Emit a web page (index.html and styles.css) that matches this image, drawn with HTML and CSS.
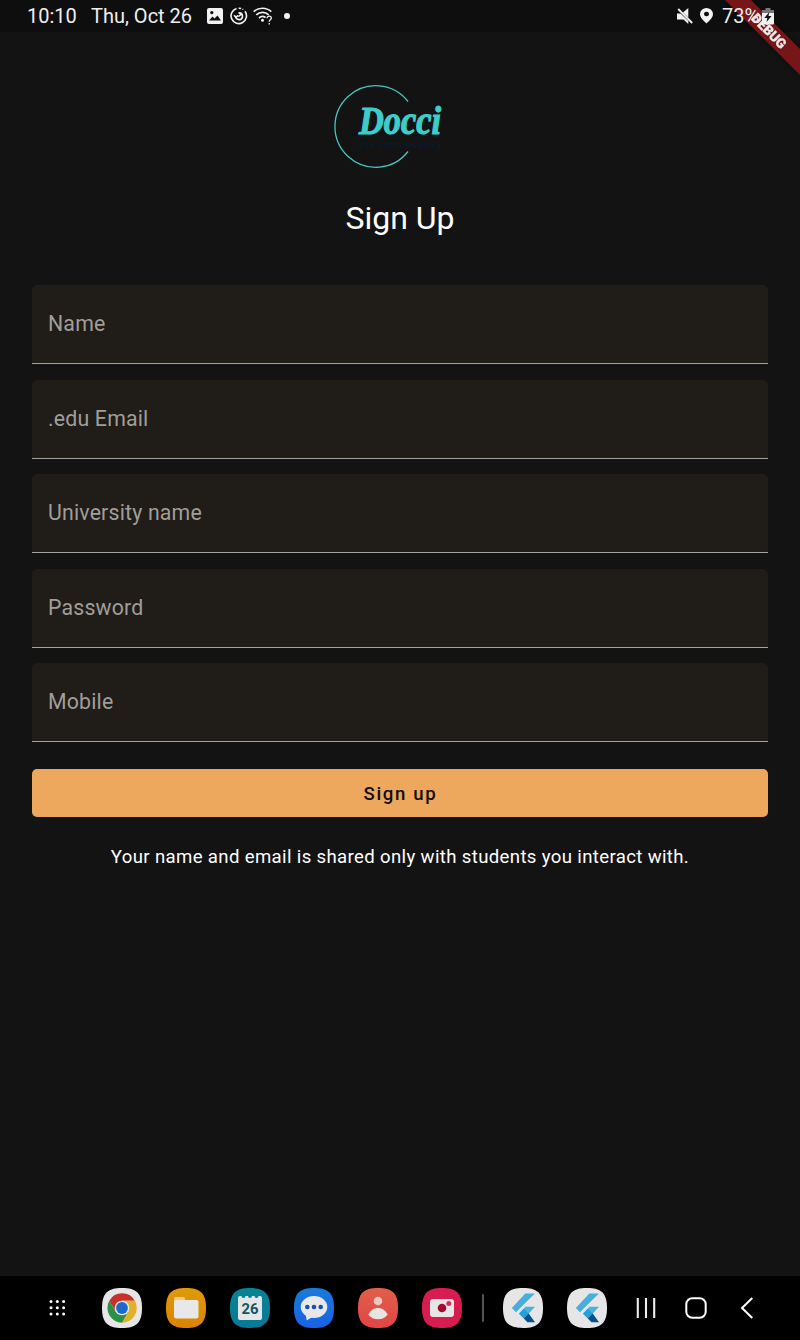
FILE: index.html
```html
<!DOCTYPE html>
<html lang="en">
<head>
<meta charset="utf-8">
<title>Docci Sign Up</title>
<link rel="stylesheet" href="styles.css">
</head>
<body>
<div class="screen">
  <header class="status">
    <span class="clock">10:10</span>
    <span class="date">Thu, Oct 26</span>
    <svg class="st-image" width="16" height="16" viewBox="0 0 16 16"><path fill="#f2f2f2" fill-rule="evenodd" d="M2 0h12a2 2 0 0 1 2 2v12a2 2 0 0 1-2 2H2a2 2 0 0 1-2-2V2a2 2 0 0 1 2-2zM2 12.500h12L10.500 7.500 7.500 10.500 5.500 8.500zM4.800 3a1.600 1.600 0 1 0 .01 0z"/></svg>
    <svg class="st-sync" width="18" height="18" viewBox="0 0 18 18" fill="none" stroke="#f2f2f2" stroke-width="1.600"><path d="M6.500 1.500A7.700 7.700 0 1 0 15 4.300"/><path d="M8.600 1.200a7.700 7.700 0 0 1 4.600 1.400" stroke-dasharray="2.500 1.500"/><path d="M5.700 9.500a3.400 3.400 0 1 0 3.500-3.700"/><path d="M4 8.200l2 2.200 2.200-2M8.500 5.500l2.500 2-2.500 2"/></svg>
    <svg class="st-wifi" width="20" height="18" viewBox="0 0 20 18" fill="none" stroke="#f2f2f2" stroke-width="1.700"><path d="M.7 4.700a13 13 0 0 1 17.600 0M3.300 7.900a9 9 0 0 1 12.400 0M6 11a5.300 5.300 0 0 1 6.500-.5"/><circle cx="9.500" cy="13.300" r="1.500" fill="#f2f2f2" stroke="none"/><path d="M14 11.300c0-3 4.300-2.700 4.300-.2 0 1.800-2.100 1.700-2.100 3.700M16.200 16v1.500" stroke-width="1.300"/></svg>
    <span class="st-dot"></span>
    <svg class="st-mute" width="16" height="17" viewBox="0 0 16 17"><path fill="#f2f2f2" d="M0 5.500h3.500L11.300 13v3L6.500 11.500H0zM6 4.500L11.300 0v9.500z"/><path d="M1.200 1l14 14" stroke="#f2f2f2" stroke-width="1.800"/></svg>
    <svg class="st-pin" width="13" height="16" viewBox="0 0 12 16" preserveAspectRatio="none"><path fill="#f2f2f2" fill-rule="evenodd" d="M6 0a6 6 0 0 1 6 6c0 3.500-3 6.500-6 9.500C3 12.500 0 9.500 0 6a6 6 0 0 1 6-6zM6 3.700a2.300 2.300 0 1 0 .01 0z"/></svg>
    <span class="percent">73%</span>
    <svg class="st-batt" width="12" height="17" viewBox="0 0 12 17"><path fill="#777" d="M3.500 0h5v2H12v4H0V2h3.500z"/><path fill="#f2f2f2" d="M0 5h12v10a1.500 1.500 0 0 1-1.500 1.500h-9A1.500 1.500 0 0 1 0 15z"/><path fill="#111" d="M7.300 4L2.300 10h3L4.600 14l5-6H6.500z"/></svg>
  </header>

  <svg class="debug" width="80" height="80" viewBox="0 0 80 80"><path fill="#771619" d="M5 0h26l49 49v26z"/><text class="debug-text" transform="translate(49 31) rotate(45)" x="0" y="4.700" text-anchor="middle" textLength="43">DEBUG</text></svg>

  <main class="page">
    <svg class="logo" width="134" height="100" viewBox="0 0 134 100"><path d="M76 26.500A40.800 40.800 0 1 0 76 76.500" fill="none" stroke="#48c5c2" stroke-width="1.300"/><text class="logo-name" x="27" y="59" textLength="82" lengthAdjust="spacingAndGlyphs">Docci</text><text class="logo-tag" x="27" y="71.500" textLength="82" lengthAdjust="spacingAndGlyphs">the campus plug</text></svg>
    <h1 class="title">Sign Up</h1>
    <form class="form">
      <div class="field"><label>Name</label></div>
      <div class="field"><label>.edu Email</label></div>
      <div class="field"><label>University name</label></div>
      <div class="field"><label>Password</label></div>
      <div class="field"><label>Mobile</label></div>
      <button class="submit" type="button">Sign up</button>
    </form>
    <p class="note">Your name and email is shared only with students you interact with.</p>
  </main>

  <nav class="dock">
    <svg class="grid-icon" width="40" height="40" viewBox="0 0 40 40" fill="#fff"><circle cx="14" cy="13.500" r="1.500"/><circle cx="20.300" cy="13.500" r="1.500"/><circle cx="26.600" cy="13.500" r="1.500"/><circle cx="14" cy="19.700" r="1.500"/><circle cx="20.300" cy="19.700" r="1.500"/><circle cx="26.600" cy="19.700" r="1.500"/><circle cx="14" cy="25.900" r="1.500"/><circle cx="20.300" cy="25.900" r="1.500"/><circle cx="26.600" cy="25.900" r="1.500"/></svg>
    <svg width="40" height="40" viewBox="0 0 40 40"><use href="#tile" fill="#e6e6e6"/><path fill="#c73129" d="M7.300 12.800A14.700 14.700 0 0 1 32.900 12.800H20L13.700 23.600z"/><path fill="#e3b127" d="M32.900 12.800A14.700 14.700 0 0 1 20 34.700L26.300 23.600 20 12.800z"/><path fill="#2a9147" d="M7.300 12.800A14.700 14.700 0 0 0 20 34.700L26.300 23.600H13.700z"/><circle cx="20" cy="20" r="7.300" fill="#e8e8e8"/><circle cx="20" cy="20" r="5.900" fill="#1b68d1"/></svg>
    <svg width="40" height="40" viewBox="0 0 40 40"><use href="#tile" fill="url(#orange)"/><path fill="#edc98a" d="M8 18V10.500A1.500 1.500 0 0 1 9.500 9h8A1.500 1.500 0 0 1 19 10.500V15z"/><rect x="8" y="12" width="24.500" height="18.500" rx="2" fill="#e8e8e8"/></svg>
    <svg width="40" height="40" viewBox="0 0 40 40"><use href="#tile" fill="url(#teal)"/><path fill="#e6e6e6" d="M10 8h1.500a2 2 0 0 0 4 0h2.500a2 2 0 0 0 4 0h2.500a2 2 0 0 0 4 0H30a2 2 0 0 1 2 2v20a2 2 0 0 1-2 2H10a2 2 0 0 1-2-2V10a2 2 0 0 1 2-2z"/><text class="cal" x="20" y="25.500" text-anchor="middle" textLength="17" lengthAdjust="spacingAndGlyphs">26</text></svg>
    <svg width="40" height="40" viewBox="0 0 40 40"><use href="#tile" fill="url(#blue)"/><ellipse cx="20" cy="19" rx="13.300" ry="11" fill="#e8e8e8"/><path fill="#e8e8e8" d="M11.500 26l1.300 6.500L19 28.500z"/><g fill="#174eb5"><circle cx="13.300" cy="19" r="2.300"/><circle cx="20" cy="19" r="2.300"/><circle cx="26.700" cy="19" r="2.300"/></g></svg>
    <svg width="40" height="40" viewBox="0 0 40 40"><use href="#tile" fill="url(#coral)"/><circle cx="20" cy="13" r="4.300" fill="#eac8c2"/><path fill="#e8e5df" d="M10.300 26.500C13 22 16 20 20 20s7 2 9.700 6.500C27 30 24 31.200 20 31.200s-7-1.200-9.700-4.700z"/></svg>
    <svg width="40" height="40" viewBox="0 0 40 40"><use href="#tile" fill="#d61c50"/><rect x="8" y="11" width="24" height="18" rx="3" fill="#e6e6e6"/><circle cx="20" cy="20" r="4.300" fill="#a40b31"/><circle cx="26.800" cy="15.500" r="2.500" fill="#cc3455"/></svg>
    <span class="divider"></span>
    <svg width="40" height="40" viewBox="0 0 40 40"><use href="#tile" fill="#e6e6e6"/><use href="#flutter"/></svg>
    <svg width="40" height="40" viewBox="0 0 40 40"><use href="#tile" fill="#e6e6e6"/><use href="#flutter"/></svg>
    <svg class="recents" width="20" height="22" viewBox="0 0 20 22"><path d="M1.800 1v20M10 1v20M18.200 1v20" stroke="#eee" stroke-width="2.100"/></svg>
    <svg class="home" width="22" height="22" viewBox="0 0 22 22"><rect x="1.300" y="1.300" width="19.400" height="19.400" rx="6" fill="none" stroke="#fff" stroke-width="2"/></svg>
    <svg class="back" width="14" height="22" viewBox="0 0 14 22"><path d="M12.300 1L2 11l10.300 10" fill="none" stroke="#fff" stroke-width="2"/></svg>
  </nav>
</div>

<svg class="defs" width="0" height="0">
  <defs>
    <path id="tile" d="M20 0C34.500 0 40 5.500 40 20S34.500 40 20 40 0 34.500 0 20 5.500 0 20 0z"/>
    <g id="flutter"><path fill="#48afdc" d="M22.300 5.500h9.500L13 24.200 8.800 20z"/><path fill="#48b3e0" d="M22.500 18.800h9.500L25.800 25.500l-5 4.800-4.800-4.600z"/><path fill="#269ed8" d="M16 25.600l4.800-4.800 4.900 4.800-4.900 4.800z"/><path fill="#07518c" d="M20.800 30.400l4.900-4.800 6.300 8.600h-7.500z"/></g>
    <linearGradient id="orange" x1="0" y1="0" x2="0" y2="1"><stop stop-color="#df9b09"/><stop offset="1" stop-color="#dc8200"/></linearGradient>
    <linearGradient id="teal" x1="0" y1="0" x2="0" y2="1"><stop stop-color="#068593"/><stop offset="1" stop-color="#08789a"/></linearGradient>
    <linearGradient id="blue" x1="0" y1="0" x2="0" y2="1"><stop stop-color="#187bd8"/><stop offset="1" stop-color="#1763e6"/></linearGradient>
    <linearGradient id="coral" x1="0" y1="0" x2="0" y2="1"><stop stop-color="#df6048"/><stop offset="1" stop-color="#e34446"/></linearGradient>
  </defs>
</svg>
</body>
</html>
```
FILE: styles.css
```css
* { box-sizing: border-box; }
body { margin: 0; background: #131313; font-family: Roboto, sans-serif; color: #fff; }
svg { display: block; flex: none; }
.defs { position: absolute; }
.screen { position: relative; width: 800px; height: 1340px; display: flex; flex-direction: column; overflow: hidden; }

.status { position: relative; z-index: 2; height: 32px; display: flex; align-items: center; padding: 0 26px 0 27px; font-size: 20px; color: #eee; white-space: nowrap; }
.screen::before { content: ""; position: absolute; top: 0; left: 0; width: 100%; height: 32px; background: #0e0e0e; }
.clock { width: 64px; }
.date { width: 116px; }
.st-sync { margin-left: 7px; }
.st-wifi { margin-left: 5px; }
.st-dot { width: 6px; height: 6px; border-radius: 50%; background: #f2f2f2; margin-left: 11px; }
.st-mute { margin-left: auto; }
.st-pin { margin-left: 7px; }
.percent { margin-left: 9px; width: 39px; }
.st-batt { margin-left: 1px; }

.debug { position: absolute; top: 0; right: 0; z-index: 1; filter: drop-shadow(0 0 3px rgba(0,0,0,.5)); }
.debug-text { font: 900 13.500px Roboto, sans-serif; fill: #f2eaea; stroke: #f2eaea; stroke-width: .3px; }

.page { flex: 1; display: flex; flex-direction: column; align-items: center; padding: 43px 32px 0; }
.logo { align-self: flex-start; margin-left: 300px; }
.logo-name { font: italic bold 41px "Liberation Serif", serif; fill: #3dcdca; stroke: #3dcdca; stroke-width: 1.200px; }
.logo-tag { font: 7.500px "DejaVu Sans", sans-serif; fill: #061d36; }
.title { margin: 24px 0 0; font-size: 32px; font-weight: 400; line-height: 38px; }
.form { width: 100%; margin-top: 48px; display: flex; flex-direction: column; gap: 15.500px; }
.field { height: 79px; padding: 0 16px .5px; display: flex; align-items: center; background: #201c17; border-radius: 5px 5px 0 0; border-bottom: 1px solid #a3a19e; font-size: 21.300px; letter-spacing: .18px; color: #a09e9b; }
.submit { height: 48px; margin-top: 11.500px; padding: 2px 0 0 1px; border: 0; border-radius: 5px; background: #eda85e; color: #130c05; font: 500 18.600px Roboto, sans-serif; letter-spacing: 1.660px; }
.note { margin: 28px 0 0; font-size: 18.600px; line-height: 24px; letter-spacing: .35px; white-space: nowrap; }

.dock { height: 64px; display: flex; align-items: center; gap: 24px; padding: 0 0 0 37px; background: #000; }
.grid-icon { margin-right: 1px; }
.divider { width: 2px; height: 28px; margin: 0 -5px 0 -4.500px; background: #555; border-radius: 1px; }
.recents { margin-left: 5.500px; }
.home { margin-left: 5px; }
.back { margin-left: 9px; }
.cal { font: 700 14px Roboto, sans-serif; fill: #12566c; }
```
